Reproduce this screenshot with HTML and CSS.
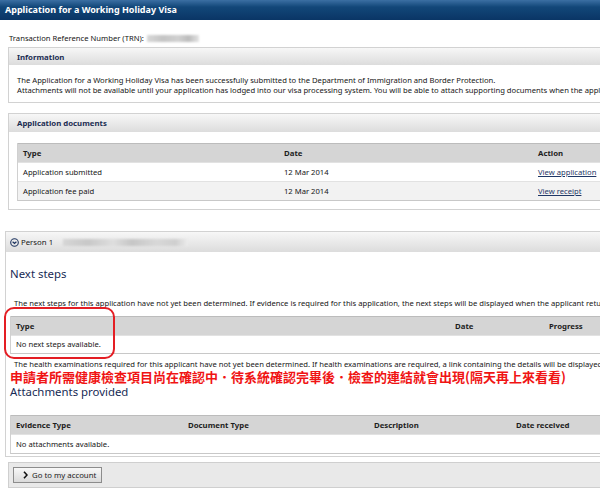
FILE: index.html
```html
<!DOCTYPE html>
<html>
<head>
    <title>Application for a Working Holiday Visa</title>
    <link rel="stylesheet" href="styles.css">
</head>
<body>
    <div class="page">
        <div class="title-bar">Application for a Working Holiday Visa</div>

        <div class="trn">Transaction Reference Number (TRN): <span class="blur trn-blur"></span></div>

        <div class="panel info-panel">
            <div class="panel-head">Information</div>
            <div class="panel-body">
                <p>The Application for a Working Holiday Visa has been successfully submitted to the Department of Immigration and Border Protection.</p>
                <p>Attachments will not be available until your application has lodged into our visa processing system. You will be able to attach supporting documents when the application has been lodged.</p>
            </div>
        </div>

        <div class="panel docs-panel">
            <div class="panel-head">Application documents</div>
            <div class="panel-body">
                <table class="grid docs-table">
                    <thead>
                        <tr><th class="col-type">Type</th><th class="col-date">Date</th><th>Action</th></tr>
                    </thead>
                    <tbody>
                        <tr><td>Application submitted</td><td>12 Mar 2014</td><td><a href="#">View application</a></td></tr>
                        <tr class="alt"><td>Application fee paid</td><td>12 Mar 2014</td><td><a href="#">View receipt</a></td></tr>
                    </tbody>
                </table>
            </div>
        </div>

        <div class="panel person-panel">
            <div class="panel-head person-head">
                <svg class="toggle-icon" width="9" height="9" viewBox="0 0 9 9">
                    <circle cx="4.5" cy="4.5" r="3.8" fill="none" stroke="#1f3560" stroke-width="1.1"/>
                    <polyline points="2.6,3.7 4.5,5.5 6.4,3.7" fill="none" stroke="#1f3560" stroke-width="1.2"/>
                </svg>
                <span>Person 1</span>
                <span class="blur name-blur"></span>
            </div>
            <div class="person-body">
                <h2>Next steps</h2>
                <p class="note">The next steps for this application have not yet been determined. If evidence is required for this application, the next steps will be displayed when the applicant returns to this page.</p>
                <table class="grid steps-table">
                    <thead>
                        <tr><th class="col-step">Type</th><th class="col-when">Date</th><th>Progress</th></tr>
                    </thead>
                    <tbody>
                        <tr><td colspan="3">No next steps available.</td></tr>
                    </tbody>
                </table>
                <p class="note health-note">The health examinations required for this applicant have not yet been determined. If health examinations are required, a link containing the details will be displayed here.</p>
                <p class="remark" lang="zh-Hant">申請者所需健康檢查項目尚在確認中．待系統確認完畢後．檢查的連結就會出現(隔天再上來看看)</p>
                <h2>Attachments provided</h2>
                <table class="grid files-table">
                    <thead>
                        <tr><th class="col-evidence">Evidence Type</th><th class="col-doc">Document Type</th><th class="col-desc">Description</th><th>Date received</th></tr>
                    </thead>
                    <tbody>
                        <tr><td colspan="4">No attachments available.</td></tr>
                    </tbody>
                </table>
            </div>
        </div>

        <div class="footer-bar">
            <button class="account-button">
                <svg width="5" height="8" viewBox="0 0 5 8">
                    <polyline points="1,0.8 4,4 1,7.2" fill="none" stroke="#111" stroke-width="1.6"/>
                </svg>
                Go to my account
            </button>
        </div>

        <!-- hand-drawn highlight over the steps table -->
        <div class="highlight"></div>
    </div>
</body>
</html>
```

FILE: styles.css
```css
html, body {
    margin: 0;
    overflow: hidden;
    background-color: #fff;
}

.page {
    position: relative;
    width: 680px;
    font-family: "Noto Sans", "DejaVu Sans", sans-serif;
    font-size: 7.65px;
    line-height: 10px;
    color: #161616;
}

p {
    margin: 0;
    white-space: nowrap;
}

.title-bar {
    height: 20px;
    line-height: 20px;
    padding-left: 5px;
    background: linear-gradient(to bottom, #3b6fa3 0%, #124779 35%, #0a3565 100%);
    color: #fff;
    font-weight: bold;
    font-size: 9px;
}

.trn {
    margin-top: 13px;
    padding-left: 9px;
}

.blur {
    display: inline-block;
    vertical-align: middle;
    filter: blur(1px);
}

.trn-blur {
    width: 52px;
    height: 7px;
    margin-left: 1px;
    background: linear-gradient(to right, #d8d8d8, #c4c4c4 30%, #d0d0d0 60%, #bcbcbc 80%, #e4e4e4);
}

.panel {
    margin-left: 8px;
    border: 1px solid #d2d2d2;
    background-color: #fff;
}

.panel-head {
    height: 17px;
    line-height: 18px;
    padding-left: 8px;
    background: linear-gradient(to bottom, #f7f7f7, #dcdcdc);
    font-weight: bold;
    font-size: 7.8px;
    color: #1b2d52;
}

.info-panel {
    margin-top: 4px;
}

.info-panel .panel-body {
    padding: 10px 8px 7px;
}

.docs-panel {
    margin-top: 10px;
}

.docs-panel .panel-head {
    height: 18px;
    line-height: 18px;
}

.docs-panel .panel-body {
    padding: 11px 0 8px 8px;
}

.grid {
    border-collapse: separate;
    border-spacing: 0;
    width: 640px;
    border-left: 1px solid #d0d0d0;
    border-bottom: 1px solid #c8c8c8;
}

.grid th {
    text-align: left;
    font-weight: bold;
    font-size: 7.8px;
    color: #1e1e1e;
    line-height: 18px;
    padding: 0 5px;
    background-color: #d5d5d5;
    border-top: 1px solid #bcbcbc;
}

.grid td {
    line-height: 18px;
    padding: 0 5px;
    border-top: 1px solid #e2e2e2;
}

.grid tr.alt td {
    background-color: #f2f2f2;
}

.grid a {
    color: #1f3766;
}

.col-type { width: 251px; }
.col-date { width: 244px; }

.person-panel {
    margin-top: 21px;
    margin-left: 5px;
}

.person-head {
    display: flex;
    align-items: center;
    height: 20px;
    padding-left: 4px;
    font-weight: normal;
    color: #161616;
}

.toggle-icon {
    margin-right: 2px;
}

.name-blur {
    width: 125px;
    height: 7px;
    margin-left: 10px;
    background: linear-gradient(to right, #d6d6d6, #c8c8c8 20%, #dedede 40%, #c6c6c6 55%, #d8d8d8 75%, #cfcfcf 90%, #ececec);
}

.person-body {
    padding: 0 0 2px 4px;
}

.person-body h2 {
    margin: 14px 0 0;
    font-size: 11.4px;
    line-height: 16px;
    font-weight: normal;
    color: #172b55;
}

.note {
    margin-top: 16px;
    padding-left: 4px;
}

.steps-table {
    margin-top: 8px;
}

.steps-table td {
    line-height: 17px;
}

.col-step { width: 429px; }
.col-when { width: 84px; }

.health-note {
    margin-top: 5px;
}

.remark {
    margin-top: 1px;
    font-family: "Noto Sans CJK TC", "Noto Sans CJK SC", sans-serif;
    font-size: 13px;
    line-height: 13px;
    font-weight: 600;
    color: #f01414;
}

.person-body .remark + h2 {
    margin-top: 1px;
}

.files-table {
    margin-top: 15px;
}

.col-evidence { width: 162px; }
.col-doc { width: 176px; }
.col-desc { width: 132px; }

.footer-bar {
    margin: 5px 0 0 8px;
    height: 16px;
    padding: 4px;
    border: 1px solid #cfcfcf;
    background-color: #e9e9e9;
}

.account-button {
    display: flex;
    align-items: center;
    gap: 4px;
    height: 16px;
    width: 89px;
    padding: 0 0 0 9px;
    border: 1px solid #8c8c8c;
    background: linear-gradient(to bottom, #f8f8f8, #dadada);
    font-family: "Noto Sans", "DejaVu Sans", sans-serif;
    font-size: 7.8px;
    color: #222;
}

.highlight {
    position: absolute;
    left: 4px;
    top: 307px;
    width: 107px;
    height: 48px;
    border: 2px solid #e41e24;
    border-radius: 10px;
}
```
